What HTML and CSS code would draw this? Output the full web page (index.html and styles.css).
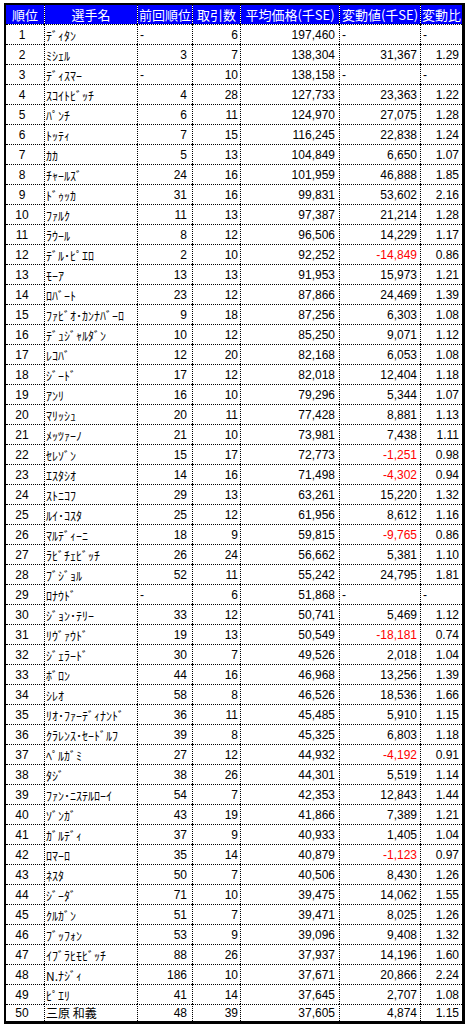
FILE: index.html
```html
<!DOCTYPE html>
<html lang="ja">
<head>
<meta charset="utf-8">
<title>選手ランキング</title>
<link rel="stylesheet" href="styles.css">
</head>
<body>
<table class="rank-table">
<thead>
<tr><th class="c1">順位</th><th class="c2">選手名</th><th class="c3">前回順位</th><th class="c4">取引数</th><th class="c5">平均価格(千SE)</th><th class="c6">変動値(千SE)</th><th class="c7">変動比</th></tr>
</thead>
<tbody>
<tr><td class="r">1</td><td class="n">ﾃﾞｨﾀﾝ</td><td class="p dash">-</td><td class="t">6</td><td class="a">197,460</td><td class="v dash">-</td><td class="x dash">-</td></tr>
<tr><td class="r">2</td><td class="n">ﾐｼｪﾙ</td><td class="p">3</td><td class="t">7</td><td class="a">138,304</td><td class="v">31,367</td><td class="x">1.29</td></tr>
<tr><td class="r">3</td><td class="n">ﾃﾞｨｽﾏｰ</td><td class="p dash">-</td><td class="t">10</td><td class="a">138,158</td><td class="v dash">-</td><td class="x dash">-</td></tr>
<tr><td class="r">4</td><td class="n">ｽｺｲﾄﾋﾞｯﾁ</td><td class="p">4</td><td class="t">28</td><td class="a">127,733</td><td class="v">23,363</td><td class="x">1.22</td></tr>
<tr><td class="r">5</td><td class="n">ﾊﾟﾝﾁ</td><td class="p">6</td><td class="t">11</td><td class="a">124,970</td><td class="v">27,075</td><td class="x">1.28</td></tr>
<tr><td class="r">6</td><td class="n">ﾄｯﾃｨ</td><td class="p">7</td><td class="t">15</td><td class="a">116,245</td><td class="v">22,838</td><td class="x">1.24</td></tr>
<tr><td class="r">7</td><td class="n">ｶｶ</td><td class="p">5</td><td class="t">13</td><td class="a">104,849</td><td class="v">6,650</td><td class="x">1.07</td></tr>
<tr><td class="r">8</td><td class="n">ﾁｬｰﾙｽﾞ</td><td class="p">24</td><td class="t">16</td><td class="a">101,959</td><td class="v">46,888</td><td class="x">1.85</td></tr>
<tr><td class="r">9</td><td class="n">ﾄﾞｩｯｶ</td><td class="p">31</td><td class="t">16</td><td class="a">99,831</td><td class="v">53,602</td><td class="x">2.16</td></tr>
<tr><td class="r">10</td><td class="n">ﾌｧﾙｸ</td><td class="p">11</td><td class="t">13</td><td class="a">97,387</td><td class="v">21,214</td><td class="x">1.28</td></tr>
<tr><td class="r">11</td><td class="n">ﾗｳｰﾙ</td><td class="p">8</td><td class="t">12</td><td class="a">96,506</td><td class="v">14,229</td><td class="x">1.17</td></tr>
<tr><td class="r">12</td><td class="n">ﾃﾞﾙ･ﾋﾟｴﾛ</td><td class="p">2</td><td class="t">10</td><td class="a">92,252</td><td class="v neg">-14,849</td><td class="x">0.86</td></tr>
<tr><td class="r">13</td><td class="n">ﾓｰｱ</td><td class="p">13</td><td class="t">13</td><td class="a">91,953</td><td class="v">15,973</td><td class="x">1.21</td></tr>
<tr><td class="r">14</td><td class="n">ﾛﾊﾞｰﾄ</td><td class="p">23</td><td class="t">12</td><td class="a">87,866</td><td class="v">24,469</td><td class="x">1.39</td></tr>
<tr><td class="r">15</td><td class="n">ﾌｧﾋﾞｵ･ｶﾝﾅﾊﾞｰﾛ</td><td class="p">9</td><td class="t">18</td><td class="a">87,256</td><td class="v">6,303</td><td class="x">1.08</td></tr>
<tr><td class="r">16</td><td class="n">ﾃﾞｭｼﾞｬﾙﾀﾞﾝ</td><td class="p">10</td><td class="t">12</td><td class="a">85,250</td><td class="v">9,071</td><td class="x">1.12</td></tr>
<tr><td class="r">17</td><td class="n">ﾚｺﾊﾞ</td><td class="p">12</td><td class="t">20</td><td class="a">82,168</td><td class="v">6,053</td><td class="x">1.08</td></tr>
<tr><td class="r">18</td><td class="n">ｼﾞｰﾄﾞ</td><td class="p">17</td><td class="t">12</td><td class="a">82,018</td><td class="v">12,404</td><td class="x">1.18</td></tr>
<tr><td class="r">19</td><td class="n">ｱﾝﾘ</td><td class="p">16</td><td class="t">10</td><td class="a">79,296</td><td class="v">5,344</td><td class="x">1.07</td></tr>
<tr><td class="r">20</td><td class="n">ﾏﾘｯｼｭ</td><td class="p">20</td><td class="t">11</td><td class="a">77,428</td><td class="v">8,881</td><td class="x">1.13</td></tr>
<tr><td class="r">21</td><td class="n">ﾒｯﾂｧｰﾉ</td><td class="p">21</td><td class="t">10</td><td class="a">73,981</td><td class="v">7,438</td><td class="x">1.11</td></tr>
<tr><td class="r">22</td><td class="n">ｾﾚｿﾞﾝ</td><td class="p">15</td><td class="t">17</td><td class="a">72,773</td><td class="v neg">-1,251</td><td class="x">0.98</td></tr>
<tr><td class="r">23</td><td class="n">ｴｽﾀｼｵ</td><td class="p">14</td><td class="t">16</td><td class="a">71,498</td><td class="v neg">-4,302</td><td class="x">0.94</td></tr>
<tr><td class="r">24</td><td class="n">ｽﾄﾆｺﾌ</td><td class="p">29</td><td class="t">13</td><td class="a">63,261</td><td class="v">15,220</td><td class="x">1.32</td></tr>
<tr><td class="r">25</td><td class="n">ﾙｲ･ｺｽﾀ</td><td class="p">25</td><td class="t">12</td><td class="a">61,956</td><td class="v">8,612</td><td class="x">1.16</td></tr>
<tr><td class="r">26</td><td class="n">ﾏﾙﾃﾞｨｰﾆ</td><td class="p">18</td><td class="t">9</td><td class="a">59,815</td><td class="v neg">-9,765</td><td class="x">0.86</td></tr>
<tr><td class="r">27</td><td class="n">ﾗﾋﾞﾁｪﾋﾞｯﾁ</td><td class="p">26</td><td class="t">24</td><td class="a">56,662</td><td class="v">5,381</td><td class="x">1.10</td></tr>
<tr><td class="r">28</td><td class="n">ﾌﾞｼﾞｮﾙ</td><td class="p">52</td><td class="t">11</td><td class="a">55,242</td><td class="v">24,795</td><td class="x">1.81</td></tr>
<tr><td class="r">29</td><td class="n">ﾛﾅｳﾄﾞ</td><td class="p dash">-</td><td class="t">6</td><td class="a">51,868</td><td class="v dash">-</td><td class="x dash">-</td></tr>
<tr><td class="r">30</td><td class="n">ｼﾞｮﾝ･ﾃﾘｰ</td><td class="p">33</td><td class="t">12</td><td class="a">50,741</td><td class="v">5,469</td><td class="x">1.12</td></tr>
<tr><td class="r">31</td><td class="n">ﾘｳﾞｧｳﾄﾞ</td><td class="p">19</td><td class="t">13</td><td class="a">50,549</td><td class="v neg">-18,181</td><td class="x">0.74</td></tr>
<tr><td class="r">32</td><td class="n">ｼﾞｪﾗｰﾄﾞ</td><td class="p">30</td><td class="t">7</td><td class="a">49,526</td><td class="v">2,018</td><td class="x">1.04</td></tr>
<tr><td class="r">33</td><td class="n">ﾎﾞﾛﾝ</td><td class="p">44</td><td class="t">16</td><td class="a">46,968</td><td class="v">13,256</td><td class="x">1.39</td></tr>
<tr><td class="r">34</td><td class="n">ｼﾚｵ</td><td class="p">58</td><td class="t">8</td><td class="a">46,526</td><td class="v">18,536</td><td class="x">1.66</td></tr>
<tr><td class="r">35</td><td class="n">ﾘｵ･ﾌｧｰﾃﾞｨﾅﾝﾄﾞ</td><td class="p">36</td><td class="t">11</td><td class="a">45,485</td><td class="v">5,910</td><td class="x">1.15</td></tr>
<tr><td class="r">36</td><td class="n">ｸﾗﾚﾝｽ･ｾｰﾄﾞﾙﾌ</td><td class="p">39</td><td class="t">8</td><td class="a">45,325</td><td class="v">6,803</td><td class="x">1.18</td></tr>
<tr><td class="r">37</td><td class="n">ﾍﾟﾙｶﾞﾐ</td><td class="p">27</td><td class="t">12</td><td class="a">44,932</td><td class="v neg">-4,192</td><td class="x">0.91</td></tr>
<tr><td class="r">38</td><td class="n">ﾀｼﾞ</td><td class="p">38</td><td class="t">26</td><td class="a">44,301</td><td class="v">5,519</td><td class="x">1.14</td></tr>
<tr><td class="r">39</td><td class="n">ﾌｧﾝ･ﾆｽﾃﾙﾛｰｲ</td><td class="p">54</td><td class="t">7</td><td class="a">42,353</td><td class="v">12,843</td><td class="x">1.44</td></tr>
<tr><td class="r">40</td><td class="n">ｿﾞﾝｶﾞ</td><td class="p">43</td><td class="t">19</td><td class="a">41,866</td><td class="v">7,389</td><td class="x">1.21</td></tr>
<tr><td class="r">41</td><td class="n">ｶﾞﾙﾃﾞｨ</td><td class="p">37</td><td class="t">9</td><td class="a">40,933</td><td class="v">1,405</td><td class="x">1.04</td></tr>
<tr><td class="r">42</td><td class="n">ﾛﾏｰﾛ</td><td class="p">35</td><td class="t">14</td><td class="a">40,879</td><td class="v neg">-1,123</td><td class="x">0.97</td></tr>
<tr><td class="r">43</td><td class="n">ﾈｽﾀ</td><td class="p">50</td><td class="t">7</td><td class="a">40,506</td><td class="v">8,430</td><td class="x">1.26</td></tr>
<tr><td class="r">44</td><td class="n">ｼﾞｰﾀﾞ</td><td class="p">71</td><td class="t">10</td><td class="a">39,475</td><td class="v">14,062</td><td class="x">1.55</td></tr>
<tr><td class="r">45</td><td class="n">ｸﾙｶﾞﾝ</td><td class="p">51</td><td class="t">7</td><td class="a">39,471</td><td class="v">8,025</td><td class="x">1.26</td></tr>
<tr><td class="r">46</td><td class="n">ﾌﾞｯﾌｫﾝ</td><td class="p">53</td><td class="t">9</td><td class="a">39,096</td><td class="v">9,408</td><td class="x">1.32</td></tr>
<tr><td class="r">47</td><td class="n">ｲﾌﾞﾗﾋﾓﾋﾞｯﾁ</td><td class="p">88</td><td class="t">26</td><td class="a">37,937</td><td class="v">14,196</td><td class="x">1.60</td></tr>
<tr><td class="r">48</td><td class="n">N.ﾅｼﾞｨ</td><td class="p">186</td><td class="t">10</td><td class="a">37,671</td><td class="v">20,866</td><td class="x">2.24</td></tr>
<tr><td class="r">49</td><td class="n">ﾋﾟｴﾘ</td><td class="p">41</td><td class="t">14</td><td class="a">37,645</td><td class="v">2,707</td><td class="x">1.08</td></tr>
<tr class="last"><td class="r">50</td><td class="n">三原 和義</td><td class="p">48</td><td class="t">39</td><td class="a">37,605</td><td class="v">4,874</td><td class="x">1.15</td></tr>
</tbody>
</table>
</body>
</html>
```

FILE: styles.css
```css
html, body {
  background: #ffffff;
}

body {
  margin: 3px 0 0 4px;
}

.rank-table {
  border-collapse: separate;
  border-spacing: 0;
  table-layout: fixed;
  width: 461px;
  border-style: solid;
  border-color: #000000;
  border-width: 2px 3px 3px 2px;
  background: #ffffff;
  font-family: "Liberation Sans", "Noto Sans CJK JP", sans-serif;
  font-size: 12px;
  color: #000000;
}

.rank-table th {
  box-sizing: border-box;
  height: 19px;
  padding: 0;
  line-height: 19px;
  background: #0000ff;
  background-clip: padding-box;
  color: #ffffff;
  font-family: "Noto Sans CJK JP", sans-serif;
  font-size: 13px;
  font-weight: normal;
  text-align: center;
  white-space: nowrap;
  overflow: hidden;
}

.rank-table th + th {
  border-left: 1px dotted #000000;
}

.c1 { width: 38px; }
.c2 { width: 93px; }
.c3 { width: 55px; }
.c4 { width: 48px; }
.c5 { width: 99px; }
.c6 { width: 81px; }
.c7 { width: 42px; }

.rank-table td {
  box-sizing: border-box;
  height: 20px;
  padding: 2px 3px 0 0;
  line-height: 17px;
  border-top: 1px dotted #000000;
  text-align: right;
  white-space: nowrap;
  overflow: hidden;
  vertical-align: top;
}

.rank-table td + td {
  border-left: 1px dotted #000000;
}

.rank-table td.r {
  text-align: center;
  padding-right: 6px;
}

.rank-table td.n {
  text-align: left;
  padding-left: 1px;
  font-family: "Noto Sans CJK JP", sans-serif;
}

.rank-table td.p {
  padding-right: 5px;
}

.rank-table td.t {
  padding-right: 2px;
}

.rank-table td.a {
  padding-right: 4px;
}

.rank-table td.v,
.rank-table td.x {
  padding-right: 3px;
}

.rank-table td.dash {
  text-align: left;
  padding-left: 2px;
}

.rank-table td.neg {
  color: #ff0000;
}

.rank-table tr.last td {
  height: 17px;
  padding-top: 0;
  line-height: 16px;
}
```
